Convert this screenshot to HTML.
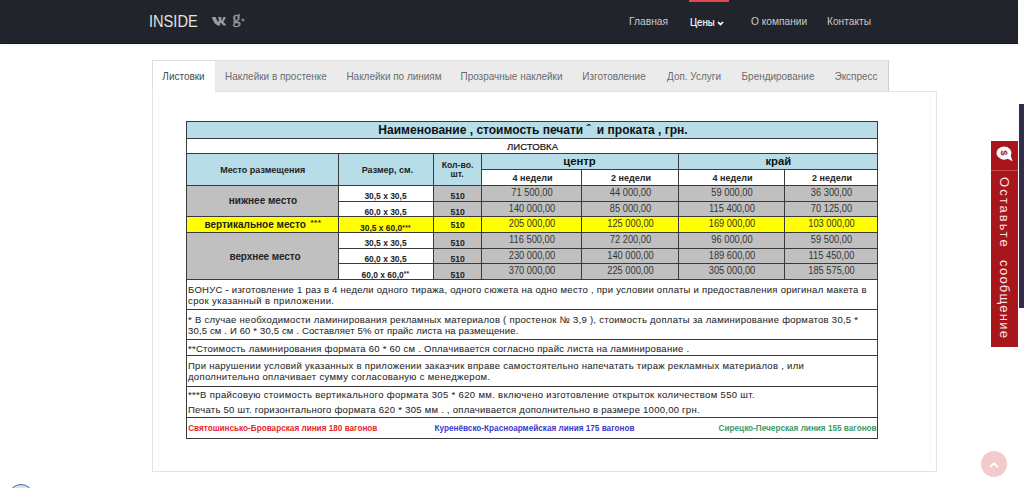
<!DOCTYPE html><html><head><meta charset="utf-8"><style>
html,body{margin:0;padding:0;background:#fff;width:1024px;height:488px;overflow:hidden;position:relative;font-family:"Liberation Sans", sans-serif}
.a{position:absolute}
.t{text-align:center;white-space:nowrap}
.tl{white-space:nowrap}
</style></head><body>
<div class="a" style="left:0;top:0;width:1018px;height:43px;background:#21242a;border-bottom:1px solid #15171a;box-shadow:0 1px 2px rgba(0,0,0,0.06)"></div>
<div class="a tl" style="left:149.3px;top:12.12px;font-size:17px;line-height:19.55px;color:#e2e2e3;transform-origin:0 0;transform:scaleX(0.86);">INSIDE</div>
<svg class="a" style="left:211.8px;top:17.2px" width="14" height="8.6" viewBox="18 92 540 328" preserveAspectRatio="none"><path fill="#9a9ba0" d="M545 117.7c3.7-12.5 0-21.7-17.8-21.7h-58.9c-15 0-21.9 7.9-25.7 20.4 0 0-17.6 73.8-42.5 98.2-8.1 8.1-11.7 10.6-16.1 10.6-2.2 0-5.4-2.5-5.4-10.6V117.7c0-15-4.3-21.7-16.7-21.7h-92.7c-9.4 0-15 7-15 13.5 0 14.2 21.2 17.5 23.4 57.5v86.8c0 19-3.4 22.5-10.9 22.5-20 0-68.6-73.4-97.4-157.4-5.8-16.3-11.5-22.9-26.6-22.9H38.8c-16.8 0-20.2 7.9-20.2 16.7 0 15.6 20 93.1 93.1 195.5C160.4 378.1 229 416 291.4 416c37.5 0 42.1-8.4 42.1-22.9 0-66.8-3.4-73.1 15.4-73.1 8.7 0 23.7 4.4 58.7 38.1C447.6 398.1 454.1 416 476.5 416h58.9c16.8 0 25.3-8.4 20.4-25-11.2-34.9-86.9-106.7-90.3-111.5-8.7-11.2-6.2-16.2 0-26.2.1-.1 72-101.3 79.5-135.6z"/></svg>
<div class="a" style="left:232.5px;top:9.4px;font-family:'Liberation Serif',serif;font-size:16px;line-height:18.4px;color:#9a9ba0;-webkit-text-stroke:0.4px #9a9ba0;white-space:nowrap">g</div>
<svg class="a" style="left:241px;top:17.5px" width="4" height="4" viewBox="0 0 4 4"><path d="M0.3 2H3.7M2 0.5V3.5" stroke="#9a9ba0" stroke-width="1"/></svg>
<div class="a" style="left:689px;top:0;width:40px;height:2px;background:#e2474e"></div>
<div class="a tl" style="left:629.2px;top:14.85px;font-size:11px;line-height:12.65px;color:#c9cacc;transform-origin:0 0;transform:scaleX(0.935);">Главная</div>
<div class="a tl" style="left:750.5px;top:14.85px;font-size:11px;line-height:12.65px;color:#c9cacc;transform-origin:0 0;transform:scaleX(0.925);">О компании</div>
<div class="a tl" style="left:826.5px;top:14.85px;font-size:11px;line-height:12.65px;color:#c9cacc;transform-origin:0 0;transform:scaleX(0.925);">Контакты</div>
<div class="a tl" style="left:689.5px;top:15.65px;font-size:11px;line-height:12.65px;color:#ffffff;transform-origin:0 0;transform:scaleX(0.87);-webkit-text-stroke:0.15px #fff">Цены</div>
<svg class="a" style="left:716.5px;top:20.5px" width="7" height="5" viewBox="0 0 7 5"><path d="M1 1 L3.5 3.6 L6 1" stroke="#fff" stroke-width="1.7" fill="none"/></svg>
<div class="a" style="left:152px;top:91px;width:783px;height:379px;border:1px solid #e3e3e3;background:#fff"></div>
<div class="a" style="left:158px;top:96px;width:1px;height:372px;background:#f7f7f7"></div>
<div class="a" style="left:930px;top:96px;width:1px;height:372px;background:#f7f7f7"></div>
<div class="a" style="left:152px;top:60px;width:62px;height:31px;background:#fff;border:1px solid #dedede;border-bottom:none"></div>
<div class="a t" style="left:152px;width:63px;top:69.84px;font-size:11px;line-height:12.65px;color:#4a4a4a;transform:scaleX(0.905);">Листовки</div>
<div class="a" style="left:215px;top:60px;width:122px;height:30px;background:#ebebeb;border-top:1px solid #dedede;border-bottom:1px solid #e2e2e2;border-right:1px solid #cfcfcf"></div>
<div class="a t" style="left:215px;width:122px;top:69.84px;font-size:11px;line-height:12.65px;color:#6b6b6b;transform:scaleX(0.905);">Наклейки в простенке</div>
<div class="a" style="left:337px;top:60px;width:114px;height:30px;background:#ebebeb;border-top:1px solid #dedede;border-bottom:1px solid #e2e2e2;border-right:1px solid #cfcfcf"></div>
<div class="a t" style="left:337px;width:114px;top:69.84px;font-size:11px;line-height:12.65px;color:#6b6b6b;transform:scaleX(0.905);">Наклейки по линиям</div>
<div class="a" style="left:451px;top:60px;width:121px;height:30px;background:#ebebeb;border-top:1px solid #dedede;border-bottom:1px solid #e2e2e2;border-right:1px solid #cfcfcf"></div>
<div class="a t" style="left:451px;width:121px;top:69.84px;font-size:11px;line-height:12.65px;color:#6b6b6b;transform:scaleX(0.905);">Прозрачные наклейки</div>
<div class="a" style="left:572px;top:60px;width:84px;height:30px;background:#ebebeb;border-top:1px solid #dedede;border-bottom:1px solid #e2e2e2;border-right:1px solid #cfcfcf"></div>
<div class="a t" style="left:572px;width:84px;top:69.84px;font-size:11px;line-height:12.65px;color:#6b6b6b;transform:scaleX(0.905);">Изготовление</div>
<div class="a" style="left:656px;top:60px;width:76px;height:30px;background:#ebebeb;border-top:1px solid #dedede;border-bottom:1px solid #e2e2e2;border-right:1px solid #cfcfcf"></div>
<div class="a t" style="left:656px;width:76px;top:69.84px;font-size:11px;line-height:12.65px;color:#6b6b6b;transform:scaleX(0.905);">Доп. Услуги</div>
<div class="a" style="left:732px;top:60px;width:92px;height:30px;background:#ebebeb;border-top:1px solid #dedede;border-bottom:1px solid #e2e2e2;border-right:1px solid #cfcfcf"></div>
<div class="a t" style="left:732px;width:92px;top:69.84px;font-size:11px;line-height:12.65px;color:#6b6b6b;transform:scaleX(0.905);">Брендирование</div>
<div class="a" style="left:824px;top:60px;width:64px;height:30px;background:#ebebeb;border-top:1px solid #dedede;border-bottom:1px solid #e2e2e2;border-right:1px solid #cfcfcf"></div>
<div class="a t" style="left:824px;width:64px;top:69.84px;font-size:11px;line-height:12.65px;color:#6b6b6b;transform:scaleX(0.905);">Экспресс</div>
<div class="a" style="left:186px;top:121px;width:691px;height:17px;background:#b7dde8"></div>
<div class="a" style="left:186px;top:138px;width:691px;height:15px;background:#fff"></div>
<div class="a" style="left:186px;top:153px;width:691px;height:16px;background:#b7dde8"></div>
<div class="a" style="left:186px;top:169px;width:295px;height:16px;background:#b7dde8"></div>
<div class="a" style="left:481px;top:169px;width:396px;height:16px;background:#fff"></div>
<div class="a" style="left:186px;top:185px;width:691px;height:94px;background:#c0c0c0"></div>
<div class="a" style="left:338px;top:185px;width:95px;height:94px;background:#fff"></div>
<div class="a" style="left:186px;top:216px;width:691px;height:16px;background:#ffff00"></div>
<div class="a" style="left:186px;top:279px;width:691px;height:159px;background:#fff"></div>
<div class="a" style="left:186px;top:121px;width:692px;height:1px;background:#3a3a3a"></div>
<div class="a" style="left:186px;top:138px;width:692px;height:1px;background:#3a3a3a"></div>
<div class="a" style="left:186px;top:153px;width:692px;height:1px;background:#3a3a3a"></div>
<div class="a" style="left:186px;top:185px;width:692px;height:1px;background:#3a3a3a"></div>
<div class="a" style="left:338px;top:201px;width:540px;height:1px;background:#3a3a3a"></div>
<div class="a" style="left:186px;top:216px;width:692px;height:1px;background:#3a3a3a"></div>
<div class="a" style="left:186px;top:232px;width:692px;height:1px;background:#3a3a3a"></div>
<div class="a" style="left:338px;top:248px;width:540px;height:1px;background:#3a3a3a"></div>
<div class="a" style="left:338px;top:263px;width:540px;height:1px;background:#3a3a3a"></div>
<div class="a" style="left:186px;top:279px;width:692px;height:1px;background:#3a3a3a"></div>
<div class="a" style="left:186px;top:309px;width:692px;height:1px;background:#3a3a3a"></div>
<div class="a" style="left:186px;top:339px;width:692px;height:1px;background:#3a3a3a"></div>
<div class="a" style="left:186px;top:355px;width:692px;height:1px;background:#3a3a3a"></div>
<div class="a" style="left:186px;top:386px;width:692px;height:1px;background:#3a3a3a"></div>
<div class="a" style="left:186px;top:417px;width:692px;height:1px;background:#3a3a3a"></div>
<div class="a" style="left:186px;top:438px;width:692px;height:1px;background:#3a3a3a"></div>
<div class="a" style="left:481px;top:169px;width:397px;height:1px;background:#3a3a3a"></div>
<div class="a" style="left:186px;top:121px;width:1px;height:318px;background:#3a3a3a"></div>
<div class="a" style="left:877px;top:121px;width:1px;height:318px;background:#3a3a3a"></div>
<div class="a" style="left:338px;top:153px;width:1px;height:127px;background:#3a3a3a"></div>
<div class="a" style="left:433px;top:153px;width:1px;height:127px;background:#3a3a3a"></div>
<div class="a" style="left:481px;top:153px;width:1px;height:127px;background:#3a3a3a"></div>
<div class="a" style="left:678px;top:153px;width:1px;height:127px;background:#3a3a3a"></div>
<div class="a" style="left:581px;top:169px;width:1px;height:111px;background:#3a3a3a"></div>
<div class="a" style="left:784px;top:169px;width:1px;height:111px;background:#3a3a3a"></div>
<div class="a t" style="left:187.5px;width:691.0px;top:124.14px;font-size:12px;line-height:13.80px;color:#111;font-weight:bold">Наименование , стоимость печати <span style="margin-right:3px">ˆ</span> и проката , грн.</div>
<div class="a tl" style="left:507px;top:140.81px;font-size:9.6px;line-height:11.04px;color:#111;-webkit-text-stroke:0.2px #111">ЛИСТОВКА</div>
<div class="a t" style="left:186.7px;width:152.0px;top:165.35px;font-size:9px;line-height:10.35px;color:#222;font-weight:bold">Место размещения</div>
<div class="a t" style="left:340px;width:95px;top:165.35px;font-size:9px;line-height:10.35px;color:#222;font-weight:bold">Размер, см.</div>
<div class="a t" style="left:433.6px;width:48.0px;top:160.13px;font-size:8.7px;line-height:10.00px;color:#222;font-weight:bold">Кол-во.</div>
<div class="a t" style="left:433px;width:48px;top:168.83px;font-size:8.7px;line-height:10.00px;color:#222;font-weight:bold">шт.</div>
<div class="a t" style="left:481px;width:197px;top:155.27px;font-size:11.3px;line-height:12.99px;color:#111;font-weight:bold">центр</div>
<div class="a t" style="left:678.8px;width:199.0px;top:155.27px;font-size:11.3px;line-height:12.99px;color:#111;font-weight:bold">край</div>
<div class="a t" style="left:482.5px;width:100.0px;top:172.66px;font-size:9px;line-height:10.35px;color:#222;font-weight:bold">4 недели</div>
<div class="a t" style="left:582.5px;width:97.0px;top:172.66px;font-size:9px;line-height:10.35px;color:#222;font-weight:bold">2 недели</div>
<div class="a t" style="left:679.5px;width:106.0px;top:172.66px;font-size:9px;line-height:10.35px;color:#222;font-weight:bold">4 недели</div>
<div class="a t" style="left:785.5px;width:93.0px;top:172.66px;font-size:9px;line-height:10.35px;color:#222;font-weight:bold">2 недели</div>
<div class="a t" style="left:338px;width:95px;top:192.32px;font-size:8.6px;line-height:9.89px;color:#222;transform:scaleX(0.98);font-weight:bold">30,5 x 30,5</div>
<div class="a t" style="left:433.7px;width:48.0px;top:192.32px;font-size:8.6px;line-height:9.89px;color:#222;transform:scaleX(1.0);font-weight:bold">510</div>
<div class="a t" style="left:482px;width:100px;top:187.05px;font-size:10px;line-height:11.50px;color:#363636;transform:scaleX(0.93);">71 500,00</div>
<div class="a t" style="left:582px;width:97px;top:187.05px;font-size:10px;line-height:11.50px;color:#363636;transform:scaleX(0.93);">44 000,00</div>
<div class="a t" style="left:679px;width:106px;top:187.05px;font-size:10px;line-height:11.50px;color:#363636;transform:scaleX(0.93);">59 000,00</div>
<div class="a t" style="left:785px;width:93px;top:187.05px;font-size:10px;line-height:11.50px;color:#363636;transform:scaleX(0.93);">36 300,00</div>
<div class="a t" style="left:338px;width:95px;top:208.02px;font-size:8.6px;line-height:9.89px;color:#222;transform:scaleX(0.98);font-weight:bold">60,0 x 30,5</div>
<div class="a t" style="left:433.7px;width:48.0px;top:208.02px;font-size:8.6px;line-height:9.89px;color:#222;transform:scaleX(1.0);font-weight:bold">510</div>
<div class="a t" style="left:482px;width:100px;top:202.75px;font-size:10px;line-height:11.50px;color:#363636;transform:scaleX(0.93);">140 000,00</div>
<div class="a t" style="left:582px;width:97px;top:202.75px;font-size:10px;line-height:11.50px;color:#363636;transform:scaleX(0.93);">85 000,00</div>
<div class="a t" style="left:679px;width:106px;top:202.75px;font-size:10px;line-height:11.50px;color:#363636;transform:scaleX(0.93);">115 400,00</div>
<div class="a t" style="left:785px;width:93px;top:202.75px;font-size:10px;line-height:11.50px;color:#363636;transform:scaleX(0.93);">70 125,00</div>
<div class="a t" style="left:338px;width:95px;top:224.12px;font-size:8.6px;line-height:9.89px;color:#222;transform:scaleX(0.98);font-weight:bold">30,5 x 60,0<span style="font-size:6.5px;position:relative;top:-1.5px;line-height:0;letter-spacing:0.4px">***</span></div>
<div class="a t" style="left:433.7px;width:48.0px;top:220.92px;font-size:8.6px;line-height:9.89px;color:#222;transform:scaleX(1.0);font-weight:bold">510</div>
<div class="a t" style="left:482px;width:100px;top:218.15px;font-size:10px;line-height:11.50px;color:#363636;transform:scaleX(0.93);">205 000,00</div>
<div class="a t" style="left:582px;width:97px;top:218.15px;font-size:10px;line-height:11.50px;color:#363636;transform:scaleX(0.93);">125 000,00</div>
<div class="a t" style="left:679px;width:106px;top:218.15px;font-size:10px;line-height:11.50px;color:#363636;transform:scaleX(0.93);">169 000,00</div>
<div class="a t" style="left:785px;width:93px;top:218.15px;font-size:10px;line-height:11.50px;color:#363636;transform:scaleX(0.93);">103 000,00</div>
<div class="a t" style="left:338px;width:95px;top:239.32px;font-size:8.6px;line-height:9.89px;color:#222;transform:scaleX(0.98);font-weight:bold">30,5 x 30,5</div>
<div class="a t" style="left:433.7px;width:48.0px;top:239.32px;font-size:8.6px;line-height:9.89px;color:#222;transform:scaleX(1.0);font-weight:bold">510</div>
<div class="a t" style="left:482px;width:100px;top:234.05px;font-size:10px;line-height:11.50px;color:#363636;transform:scaleX(0.93);">116 500,00</div>
<div class="a t" style="left:582px;width:97px;top:234.05px;font-size:10px;line-height:11.50px;color:#363636;transform:scaleX(0.93);">72 200,00</div>
<div class="a t" style="left:679px;width:106px;top:234.05px;font-size:10px;line-height:11.50px;color:#363636;transform:scaleX(0.93);">96 000,00</div>
<div class="a t" style="left:785px;width:93px;top:234.05px;font-size:10px;line-height:11.50px;color:#363636;transform:scaleX(0.93);">59 500,00</div>
<div class="a t" style="left:338px;width:95px;top:255.02px;font-size:8.6px;line-height:9.89px;color:#222;transform:scaleX(0.98);font-weight:bold">60,0 x 30,5</div>
<div class="a t" style="left:433.7px;width:48.0px;top:255.02px;font-size:8.6px;line-height:9.89px;color:#222;transform:scaleX(1.0);font-weight:bold">510</div>
<div class="a t" style="left:482px;width:100px;top:249.75px;font-size:10px;line-height:11.50px;color:#363636;transform:scaleX(0.93);">230 000,00</div>
<div class="a t" style="left:582px;width:97px;top:249.75px;font-size:10px;line-height:11.50px;color:#363636;transform:scaleX(0.93);">140 000,00</div>
<div class="a t" style="left:679px;width:106px;top:249.75px;font-size:10px;line-height:11.50px;color:#363636;transform:scaleX(0.93);">189 600,00</div>
<div class="a t" style="left:785px;width:93px;top:249.75px;font-size:10px;line-height:11.50px;color:#363636;transform:scaleX(0.93);">115 450,00</div>
<div class="a t" style="left:338px;width:95px;top:270.62px;font-size:8.6px;line-height:9.89px;color:#222;transform:scaleX(0.98);font-weight:bold">60,0 x 60,0<span style="font-size:6.5px;position:relative;top:-2px;line-height:0;letter-spacing:0.4px">**</span></div>
<div class="a t" style="left:433.7px;width:48.0px;top:270.62px;font-size:8.6px;line-height:9.89px;color:#222;transform:scaleX(1.0);font-weight:bold">510</div>
<div class="a t" style="left:482px;width:100px;top:265.35px;font-size:10px;line-height:11.50px;color:#363636;transform:scaleX(0.93);">370 000,00</div>
<div class="a t" style="left:582px;width:97px;top:265.35px;font-size:10px;line-height:11.50px;color:#363636;transform:scaleX(0.93);">225 000,00</div>
<div class="a t" style="left:679px;width:106px;top:265.35px;font-size:10px;line-height:11.50px;color:#363636;transform:scaleX(0.93);">305 000,00</div>
<div class="a t" style="left:785px;width:93px;top:265.35px;font-size:10px;line-height:11.50px;color:#363636;transform:scaleX(0.93);">185 575,00</div>
<div class="a t" style="left:187px;width:152px;top:195.45px;font-size:10px;line-height:11.50px;color:#222;font-weight:bold">нижнее место</div>
<div class="a t" style="left:189px;width:152px;top:251.25px;font-size:10px;line-height:11.50px;color:#252525;font-weight:bold;letter-spacing:-0.1px">верхнее место</div>
<div class="a tl" style="left:204.4px;top:218.95px;font-size:10px;line-height:11.50px;color:#222;font-weight:bold">вертикальное место</div>
<div class="a tl" style="left:310.5px;top:217.76px;font-size:8px;line-height:9.20px;color:#222;font-weight:bold;letter-spacing:0.5px">***</div>
<div class="a tl" style="left:188px;top:285.00px;font-size:9.5px;line-height:10.92px;color:#2a2a2a;letter-spacing:0.265px;-webkit-text-stroke:0.07px #2a2a2a">БОНУС - изготовление 1 раз в 4 недели одного тиража, одного сюжета на одно место , при условии оплаты и предоставления оригинал макета в</div>
<div class="a tl" style="left:188px;top:296.00px;font-size:9.5px;line-height:10.92px;color:#2a2a2a;letter-spacing:0.38px;-webkit-text-stroke:0.07px #2a2a2a">срок указанный в приложении.</div>
<div class="a tl" style="left:188px;top:315.40px;font-size:9.5px;line-height:10.92px;color:#2a2a2a;letter-spacing:0.277px;-webkit-text-stroke:0.07px #2a2a2a">* В случае необходимости ламинирования рекламных материалов ( простенок № 3,9 ), стоимость доплаты за ламинирование форматов 30,5 *</div>
<div class="a tl" style="left:188px;top:326.40px;font-size:9.5px;line-height:10.92px;color:#2a2a2a;letter-spacing:0.157px;-webkit-text-stroke:0.07px #2a2a2a">30,5 см . И 60 * 30,5 см . Составляет 5% от прайс листа на размещение.</div>
<div class="a tl" style="left:188px;top:344.40px;font-size:9.5px;line-height:10.92px;color:#2a2a2a;letter-spacing:0.255px;-webkit-text-stroke:0.07px #2a2a2a">**Стоимость ламинирования формата 60 * 60 см . Оплачивается согласно прайс листа на ламинирование .</div>
<div class="a tl" style="left:188px;top:361.40px;font-size:9.5px;line-height:10.92px;color:#2a2a2a;letter-spacing:0.291px;-webkit-text-stroke:0.07px #2a2a2a">При нарушении условий указанных в приложении заказчик вправе самостоятельно напечатать тираж рекламных материалов , или</div>
<div class="a tl" style="left:188px;top:372.40px;font-size:9.5px;line-height:10.92px;color:#2a2a2a;letter-spacing:0.317px;-webkit-text-stroke:0.07px #2a2a2a">дополнительно оплачивает сумму согласованую с менеджером.</div>
<div class="a tl" style="left:188px;top:390.20px;font-size:9.5px;line-height:10.92px;color:#2a2a2a;letter-spacing:0.341px;-webkit-text-stroke:0.07px #2a2a2a">***В прайсовую стоимость вертикального формата 305 * 620 мм. включено изготовление открыток количеством 550 шт.</div>
<div class="a tl" style="left:188px;top:405.40px;font-size:9.5px;line-height:10.92px;color:#2a2a2a;letter-spacing:0.258px;-webkit-text-stroke:0.07px #2a2a2a">Печать 50 шт. горизонтального формата 620 * 305 мм . , оплачивается дополнительно в размере 1000,00 грн.</div>
<div class="a tl" style="left:188.2px;top:423.58px;font-size:8.2px;line-height:9.43px;color:#e8262a;font-weight:bold">Святошинсько-Броварская линия 180 вагонов</div>
<div class="a tl" style="left:434.5px;top:423.58px;font-size:8.2px;line-height:9.43px;color:#3a3acc;font-weight:bold">Куренёвско-Красноармейская линия 175 вагонов</div>
<div class="a tl" style="left:718.6px;top:423.58px;font-size:8.2px;line-height:9.43px;color:#3a9a6a;font-weight:bold">Сирецко-Печерская линия 155 вагонов</div>
<div class="a" style="left:1019px;top:104px;width:5px;height:204px;background:#302c4a"></div>
<div class="a" style="left:991px;top:141px;width:27px;height:206px;background:#a8151b"></div>
<div class="a" style="left:991px;top:170px;width:27px;height:1px;background:#c04a4f"></div>
<svg class="a" style="left:995px;top:145px" width="20" height="19" viewBox="0 0 20 19"><path d="M9 1.4 A7.4 6.6 0 1 0 12.7 13.7 L17.6 16.2 L15.7 10.8 A7.4 6.6 0 0 0 9 1.4 Z" fill="#fff"/><text x="9.5" y="11.6" font-family="Liberation Sans" font-weight="bold" font-size="9.5" fill="#a8151b" text-anchor="middle" transform="rotate(90 9.5 8)">$</text></svg>
<div class="a" style="left:1012px;top:176.8px;transform-origin:0 0;transform:rotate(90deg);font-size:13px;line-height:16px;color:#f5e6e6;letter-spacing:2.05px;white-space:nowrap">Оставьте</div>
<div class="a" style="left:1012px;top:259.5px;transform-origin:0 0;transform:rotate(90deg);font-size:13px;line-height:16px;color:#f5e6e6;letter-spacing:1.25px;white-space:nowrap">сообщение</div>
<div class="a" style="left:981px;top:451px;width:26px;height:26px;border-radius:50%;background:#f4cbcc"></div>
<svg class="a" style="left:988px;top:460.5px" width="12" height="8" viewBox="0 0 12 8"><path d="M2 6 L6 2.5 L10 6" stroke="#fff" stroke-width="1.8" fill="none"/></svg>
<div class="a" style="left:8px;top:484px;width:24px;height:24px;border-radius:50%;border:1.5px solid #3d6f9e;background:#d6e4f0"></div>
</body></html>
